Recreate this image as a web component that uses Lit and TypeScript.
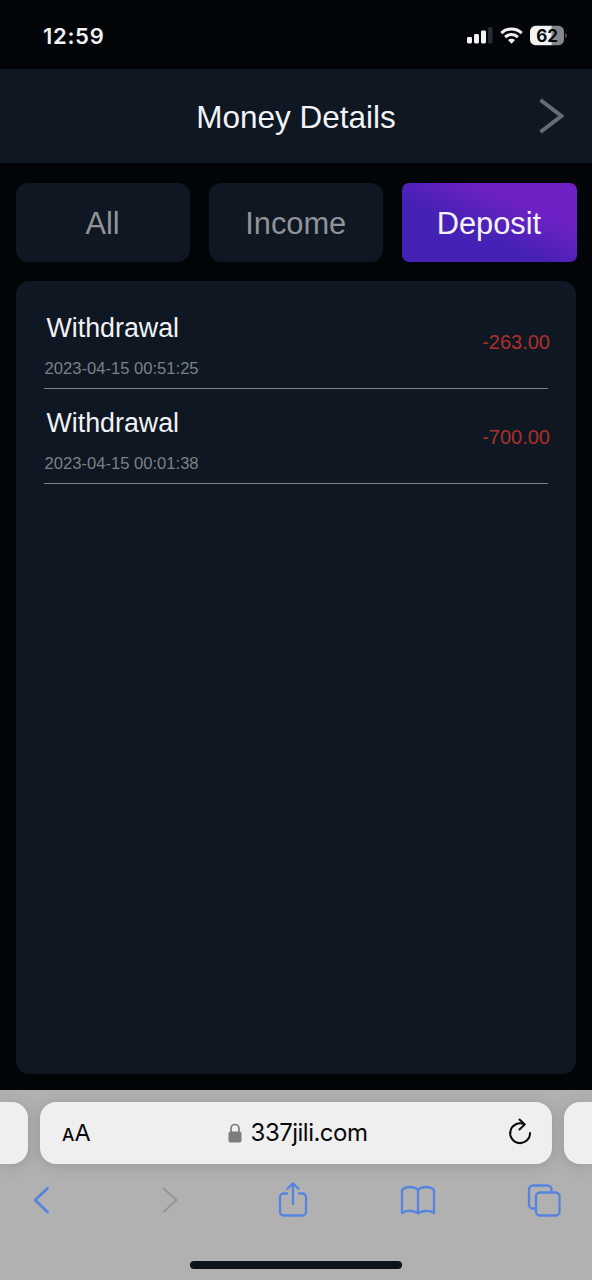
import { LitElement, html, css } from "lit";
import { customElement, state } from "lit/decorators.js";

interface Entry {
  title: string;
  time: string;
  amount: string;
}

@customElement("status-bar")
class StatusBar extends LitElement {
  static styles = css`
    :host {
      box-sizing: border-box;
      height: 69px;
      padding: 2px 24px 0 43px;
      display: flex;
      align-items: center;
      justify-content: space-between;
      background: #010508;
      color: #f1f3f5;
      font-family: Inter, sans-serif;
    }
    .clock {
      font-size: 22px;
      font-weight: 600;
      line-height: 26px;
      letter-spacing: 0.7px;
    }
    .icons {
      display: block;
    }
    .level {
      font: 700 17px Inter, sans-serif;
      fill: #06090c;
    }
  `;
  render() {
    return html`
      <span class="clock">12:59</span>
      <svg class="icons" width="102" height="22" viewBox="0 0 102 22">
        <g fill="#f1f3f5">
          <rect x="1" y="12" width="5" height="6.5" rx="1.4" />
          <rect x="8" y="9" width="5" height="9.5" rx="1.4" />
          <rect x="15" y="5.5" width="5" height="13" rx="1.4" />
          <rect x="22" y="2" width="4.6" height="16.5" rx="1.4" fill="#252a38" />
        </g>
        <g fill="none" stroke="#f1f3f5" stroke-width="3">
          <path d="M35.3 8.1a14.8 14.8 0 0 1 20.4 0" />
          <path d="M39.1 12.1a9.2 9.2 0 0 1 12.8 0" />
        </g>
        <path d="M45.500 18.700l-3.500-3.600a5 5 0 0 1 7 0z" fill="#f1f3f5" />
        <path d="M69.500 .8H86V20.200H69.500a5.500 5.500 0 0 1-5.500-5.500V6.300a5.500 5.500 0 0 1 5.500-5.500z" fill="#f1f3f5" />
        <path d="M85.500 .8H92.500a5.500 5.500 0 0 1 5.500 5.500V14.700a5.500 5.500 0 0 1-5.500 5.500H85.500z" fill="#85878a" />
        <path d="M99.500 7.700q2.300 2.800 0 5.600z" fill="#85878a" />
        <text class="level" x="81" y="16.700" text-anchor="middle">62</text>
      </svg>
    `;
  }
}

@customElement("page-header")
class PageHeader extends LitElement {
  static styles = css`
    :host {
      box-sizing: border-box;
      height: 94px;
      padding: 0 28px 0 54px;
      display: grid;
      grid-template-columns: 1fr 26px;
      align-items: center;
      background: #0e1722;
    }
    .title {
      padding-top: 2px;
      text-align: center;
      font-size: 31.500px;
      line-height: 36px;
      color: #f1f3f6;
    }
    .arrow {
      display: block;
    }
  `;
  render() {
    return html`
      <div class="title">Money Details</div>
      <svg class="arrow" width="26" height="38" viewBox="0 0 26 38">
        <path d="M2.500 3L23.300 19L2.500 35" fill="none" stroke="#666c75" stroke-width="4" />
      </svg>
    `;
  }
}

@customElement("filter-tabs")
class FilterTabs extends LitElement {
  @state() private active = "Deposit";
  static styles = css`
    :host {
      display: grid;
      grid-template-columns: repeat(3, 1fr);
      gap: 19px;
      padding: 20px 15.500px 19px 16px;
    }
    .tab {
      height: 79px;
      padding: 3px 1px 0 0;
      border: 0;
      border-radius: 12px;
      background: #0e1722;
      color: #919398;
      font: 30.800px "Liberation Sans", Arial, sans-serif;
    }
    .active {
      border-radius: 7px;
      background: linear-gradient(24deg, #4521b5 40%, #6d21c4 70%);
      color: #f4f1fb;
    }
  `;
  render() {
    return ["All", "Income", "Deposit"].map(
      (name) => html`<button
        class=${name === this.active ? "tab active" : "tab"}
        @click=${() => (this.active = name)}
      >${name}</button>`
    );
  }
}

@customElement("record-list")
class RecordList extends LitElement {
  private entries: Entry[] = [
    { title: "Withdrawal", time: "2023-04-15 00:51:25", amount: "-263.00" },
    { title: "Withdrawal", time: "2023-04-15 00:01:38", amount: "-700.00" },
  ];
  static styles = css`
    :host {
      box-sizing: border-box;
      height: 793px;
      margin: 0 16px;
      padding: 13px 28px 0;
      display: block;
      border-radius: 13px;
      background: #0e1722;
    }
    .row {
      box-sizing: border-box;
      height: 95px;
      padding-top: 17px;
      display: flex;
      justify-content: space-between;
      border-bottom: 1px solid #7f858c;
    }
    .title {
      padding-left: 2.500px;
      font-size: 26.800px;
      line-height: 34px;
      color: #f0f2f5;
    }
    .time {
      padding: 14px 0 0 0.500px;
      font-size: 16.600px;
      line-height: 20px;
      color: #7c8086;
    }
    .amount {
      margin-right: -2px;
      padding-top: 19px;
      font-size: 20px;
      line-height: 24px;
      color: #ad2f2b;
    }
  `;
  render() {
    return this.entries.map(
      (e) => html`<div class="row">
        <div>
          <div class="title">${e.title}</div>
          <div class="time">${e.time}</div>
        </div>
        <div class="amount">${e.amount}</div>
      </div>`
    );
  }
}

@customElement("browser-bar")
class BrowserBar extends LitElement {
  static styles = css`
    :host {
      height: 190px;
      margin-top: 16px;
      display: block;
      overflow: hidden;
      background: #b1b1b1;
      font-family: Inter, sans-serif;
    }
    .pages {
      display: grid;
      grid-template-columns: 28px 512px 28px;
      gap: 12px;
      padding-top: 11.500px;
    }
    .pill {
      height: 62.500px;
      border-radius: 16px;
      background: #efefef;
      box-shadow: 0 2px 14px rgba(80, 88, 92, 0.28);
    }
    .before {
      border-radius: 0 16px 16px 0;
    }
    .after {
      border-radius: 16px 0 0 16px;
    }
    .address {
      box-sizing: border-box;
      padding: 0 19px 0 22px;
      display: grid;
      grid-template-columns: 60px 1fr 60px;
      align-items: center;
      color: #08090b;
    }
    .size {
      padding-top: 3px;
      font-size: 17.500px;
      font-weight: 500;
      line-height: 30px;
    }
    .big {
      font-size: 23.500px;
      font-weight: 400;
    }
    .site {
      display: flex;
      align-items: center;
      justify-content: center;
      gap: 9px;
      padding: 1px 0 0;
    }
    .host {
      font-size: 24px;
      line-height: 30px;
      letter-spacing: -0.520px;
    }
    .reload {
      justify-self: end;
      margin-bottom: 2px;
    }
    .tools {
      padding: 16px 28px 0 21px;
      display: flex;
      justify-content: space-between;
      align-items: center;
      fill: none;
      stroke: #5584e0;
      stroke-width: 2.300;
      stroke-linejoin: round;
      stroke-linecap: round;
    }
    .home {
      width: 212px;
      height: 7.500px;
      margin: 41px auto 0;
      border-radius: 4px;
      background: #0c131b;
    }
  `;
  render() {
    return html`
      <div class="pages">
        <div class="pill before"></div>
        <div class="pill address">
          <div class="size">A<span class="big">A</span></div>
          <div class="site">
            <svg width="14" height="20" viewBox="0 0 14 20">
              <path d="M3 10V5.500a4 4 0 0 1 8 0V10" fill="none" stroke="#7d7d7d" stroke-width="1.700" />
              <rect x=".5" y="8.500" width="13" height="11" rx="2" fill="#7d7d7d" />
            </svg>
            <span class="host">337jili.com</span>
          </div>
          <svg class="reload" width="26" height="30" viewBox="0 0 26 30" fill="none" stroke="#08090b" stroke-width="2" stroke-linecap="round" stroke-linejoin="round">
            <path d="M17.200 7.200A9.900 9.900 0 1 0 23 16" />
            <path d="M12.500 2.500L17.800 7.400L12.500 12.500" />
          </svg>
        </div>
        <div class="pill after"></div>
      </div>
      <div class="tools">
        <svg width="40" height="40" viewBox="-20 0 40 40"><path d="M6.500 8.500L-6 20L6.500 32" stroke-width="2.800" /></svg>
        <svg width="40" height="40" viewBox="-20 0 40 40"><path d="M-3.500 8.500L9.500 20L-3.500 32" stroke="#8d8d8d" stroke-width="1.500" /></svg>
        <svg width="40" height="40" viewBox="-2 0 40 40">
          <path d="M12 13.500H8.500a3.500 3.500 0 0 0-3.500 3.500V32a3.500 3.500 0 0 0 3.500 3.500H27.500a3.500 3.500 0 0 0 3.500-3.500V17a3.500 3.500 0 0 0-3.500-3.500H24" />
          <path d="M18 24V3.500M12.500 8.800L18 3.300L23.500 8.800" />
        </svg>
        <svg width="40" height="40" viewBox="-1 0 40 40">
          <path d="M19 10C15.500 6 6.500 6 3 10V33C7 30 15 30 19 33.500C23 30 31 30 35 33V10C31.500 6 22.500 6 19 10ZM19 10V33" />
        </svg>
        <svg width="40" height="40" viewBox="-3 0 40 40">
          <path d="M8.500 28.500H6a4 4 0 0 1-4-4V9.500a4 4 0 0 1 4-4H20.500a4 4 0 0 1 4 4V12" />
          <rect x="9" y="12.500" width="23.500" height="23" rx="4" />
        </svg>
      </div>
      <div class="home"></div>
    `;
  }
}

@customElement("app-root")
class AppRoot extends LitElement {
  static styles = css`
    :host {
      display: flex;
      flex-direction: column;
      height: 1280px;
      overflow: hidden;
      background: #010508;
      font-family: "Liberation Sans", Arial, sans-serif;
    }
  `;
  render() {
    return html`
      <status-bar></status-bar>
      <page-header></page-header>
      <filter-tabs></filter-tabs>
      <record-list></record-list>
      <browser-bar></browser-bar>
    `;
  }
}
